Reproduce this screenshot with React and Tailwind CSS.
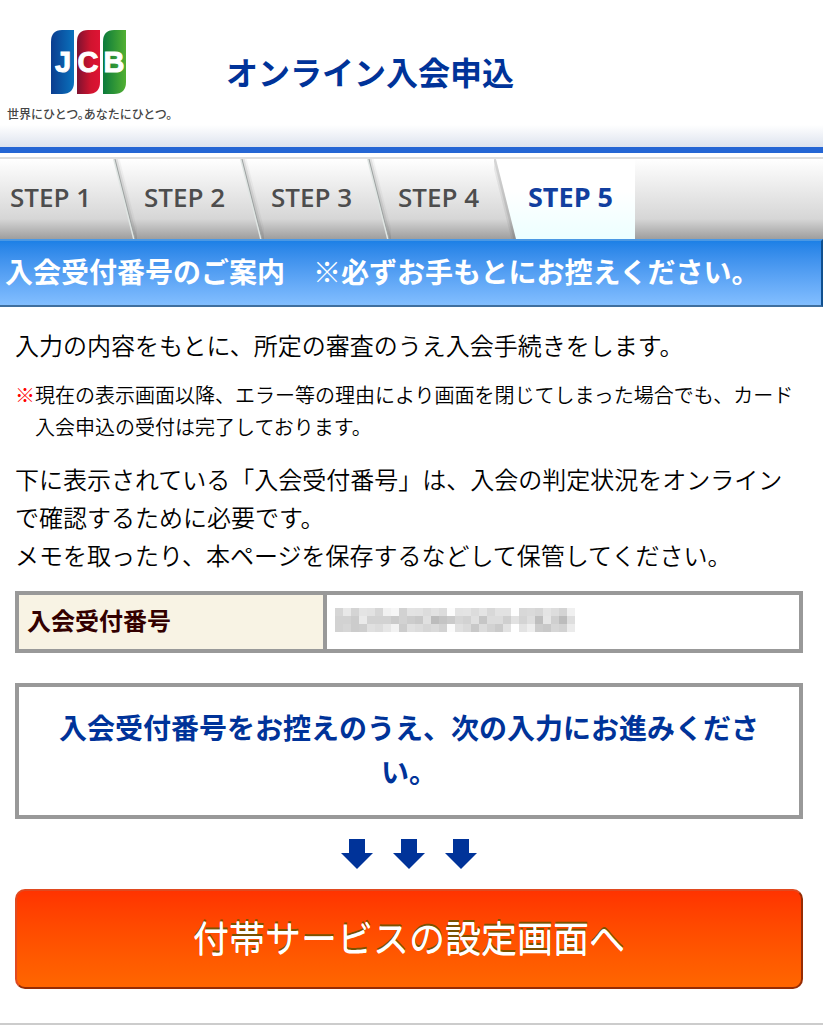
const steps = ["STEP 1", "STEP 2", "STEP 3", "STEP 4", "STEP 5"];

const currentStep = 4;

// grey levels of the masked number, one row per line
const maskRows = [
    "d6 e8 d4 e4 e2 d6 f1 f6 d2 e3 e2 dc e2 dc fc e3 e4 dc e4 d8 e2 e2 fe d8 da d6 e4 dd d4 f0",
    "d2 d2 cc ea d2 d2 d2 ca d2 cc c8 e0 bc c4 ca d6 d2 e0 c6 dc dc cf e2 d4 de be e6 cf bc de",
    "d2 d6 cc ce e0 dc e6 f2 cc e0 dc d6 da d2 fb e0 da c8 dc d2 ca e2 ff e3 ee cc c8 d6 d2 eb"
].map((row) => row.split(" "));

function JcbLogo() {

    return (

        <svg
            className="h-[66px] w-[78px]"
            viewBox="0 0 78 66"
            role="img"
            aria-label="JCB"
        >
            <defs>
                <linearGradient id="jcbBlue">
                    <stop offset="0" stopColor="#0b3d8f" />
                    <stop offset="1" stopColor="#0a72bd" />
                </linearGradient>
                <linearGradient id="jcbRed">
                    <stop offset="0" stopColor="#7d1230" />
                    <stop offset="0.6" stopColor="#d0142f" />
                    <stop offset="1" stopColor="#de1434" />
                </linearGradient>
                <linearGradient id="jcbGreen">
                    <stop offset="0" stopColor="#0b7a3b" />
                    <stop offset="1" stopColor="#52b032" />
                </linearGradient>
            </defs>
            <path d="M13 2H25V54Q25 66 13 66H2V14Q2 2 13 2Z" fill="url(#jcbBlue)" />
            <path d="M39 2H51V54Q51 66 39 66H28V14Q28 2 39 2Z" fill="url(#jcbRed)" />
            <path d="M65 2H77V54Q77 66 65 66H54V14Q54 2 65 2Z" fill="url(#jcbGreen)" />
            <g
                fill="#fff"
                stroke="#fff"
                fontFamily="Liberation Sans, sans-serif"
                fontWeight="700"
                fontSize="29"
                textAnchor="middle"
            >
                <text x="14" y="44">J</text>
                <text x="39" y="44">C</text>
                <text x="65" y="44">B</text>
            </g>
        </svg>

    );

}

function StepDivider({ beforeCurrent }) {

    return (

        <svg
            className="h-20 w-6 shrink-0"
            viewBox="0 0 24 80"
            aria-hidden="true"
        >
            <defs>
                <linearGradient id="currentFill" x2="0" y2="1">
                    <stop offset="0.4" stopColor="#fff" />
                    <stop offset="1" stopColor="#ecffff" />
                </linearGradient>
            </defs>
            {
                beforeCurrent
                    ? (
                        <>
                            <path d="M0 0L20 80" stroke="#555" strokeOpacity="0.1" strokeWidth="5" />
                            <path d="M1 0L21 80" stroke="#555" strokeOpacity="0.15" strokeWidth="3" />
                            <path d="M2 0H24V80H22Z" fill="url(#currentFill)" />
                        </>
                    )
                    : (
                        <>
                            <path d="M4 0L24 80" stroke="#555" strokeOpacity="0.06" strokeWidth="5" />
                            <path d="M3 0L23 80" stroke="#555" strokeOpacity="0.12" strokeWidth="3" />
                            <path d="M1 0L21 80" stroke="#e0e5e3" strokeWidth="2" />
                            <path d="M2 0L22 80" stroke="#9ca1a0" />
                        </>
                    )
            }
        </svg>

    );

}

function StepBar() {

    return (

        <nav
            aria-label="STEP"
            className="mt-1 border-t-2 border-[#dedede] bg-linear-to-b from-white via-[#d6d6d6] via-75% to-[#9e9e9e]"
        >

            <ol className="flex h-20">

                {steps.map((step, i) => (

                    <li
                        key={step}
                        aria-current={i === currentStep ? "step" : undefined}
                        className="flex"
                    >

                        {i > 0 && <StepDivider beforeCurrent={i === currentStep} />}

                        <span
                            className={
                                i === currentStep
                                    ? "w-[117px] bg-linear-to-b from-white from-40% to-[#ecffff] pl-[10px] font-['Open_Sans',sans-serif] text-[27px] leading-[76px] font-bold text-[#123f9f]"
                                    : i === 0
                                        ? "w-[113px] pl-[10px] font-['Open_Sans',sans-serif] text-[26px] leading-[76px] font-semibold text-[#4d4d4d]"
                                        : "w-[103px] pl-[7px] font-['Open_Sans',sans-serif] text-[26px] leading-[76px] font-semibold text-[#4d4d4d]"
                            }
                        >
                            {step}
                        </span>

                    </li>

                ))}

            </ol>

        </nav>

    );

}

function MaskedNumber() {

    return (

        <svg
            className="h-6 w-60"
            viewBox="0 0 30 3"
            shapeRendering="crispEdges"
            aria-hidden="true"
        >
            {maskRows.map((row, y) =>
                row.map((c, x) => (
                    <rect
                        key={`${x}-${y}`}
                        x={x}
                        y={y}
                        width="1"
                        height="1"
                        fill={`#${c}${c}${c}`}
                    />
                ))
            )}
        </svg>

    );

}

function DownArrow() {

    return (

        <svg className="h-[30px] w-8" viewBox="0 0 32 30" aria-hidden="true">
            <path d="M8 0H24V14H32L16 30L0 14H8Z" fill="#039" />
        </svg>

    );

}

function App() {

    return (

        <div className="border-b-2 border-[#ccc] bg-white font-['Noto_Sans_CJK_JP',sans-serif] font-[350] text-black">

            {/* Header */}

            <header className="flex h-[153px] items-start border-b-[6px] border-[#2566d4] bg-linear-to-b from-white from-85% to-[#dde3ee]">

                <div className="flex w-[219px] flex-col pt-7 pl-[7px]">

                    <div className="pl-[42px]">
                        <JcbLogo />
                    </div>

                    <p className="mt-2 text-[12px] leading-6 font-medium whitespace-nowrap text-[#444] [font-feature-settings:'halt']">
                        世界にひとつ。あなたにひとつ。
                    </p>

                </div>

                <h1 className="pt-[47px] pl-[7px] text-[32px] leading-[48px] font-bold text-[#039]">
                    オンライン入会申込
                </h1>

            </header>

            <StepBar />

            <h2 className="border-y-2 border-r-2 border-t-[#4a98e4] border-r-[#10508f] border-b-[#3f6f9f] bg-linear-to-b from-[#1c80e6] to-[#82beff] pb-1 pl-[5px] text-[28px] leading-[60px] font-bold text-white">
                入会受付番号のご案内　※必ずお手もとにお控えください。
            </h2>

            <main className="pt-[19px] pr-5 pb-[34px] pl-[15px]">

                <p className="text-[24px] leading-[38px]">
                    入力の内容をもとに、所定の審査のうえ入会手続きをします。
                </p>

                <p className="mt-[15px] flex text-[20px] leading-8">
                    <span className="text-[#f00]">※</span>
                    <span>
                        現在の表示画面以降、エラー等の理由により画面を閉じてしまった場合でも、カード入会申込の受付は完了しております。
                    </span>
                </p>

                <p className="mt-[17px] text-[24px] leading-[38px]">
                    下に表示されている「入会受付番号」は、入会の判定状況をオンラインで確認するために必要です。
                    <br />
                    メモを取ったり、本ページを保存するなどして保管してください。
                </p>

                <table className="mt-[17px] w-full table-fixed border-collapse">
                    <tbody>
                        <tr>
                            <th
                                scope="row"
                                className="w-[308px] border-4 border-[#999] bg-[#f8f3e4] px-2 pt-[6px] pb-[10px] text-left text-[24px] leading-[38px] font-bold text-[#300]"
                            >
                                入会受付番号
                            </th>
                            <td className="border-4 border-[#999] px-2 pt-[6px] pb-[10px]">
                                <MaskedNumber />
                            </td>
                        </tr>
                    </tbody>
                </table>

                {/* Next step */}

                <p className="mt-[30px] border-4 border-[#999] px-8 pt-[18px] pb-[22px] text-center text-[28px] leading-[44px] font-bold text-[#039]">
                    入会受付番号をお控えのうえ、次の入力にお進みください。
                </p>

                <div className="mt-5 flex justify-center gap-5">
                    <DownArrow />
                    <DownArrow />
                    <DownArrow />
                </div>

                <button
                    type="button"
                    className="mt-5 h-[100px] w-full rounded-[10px] border-2 border-t-[#e04a20] border-r-[#962c04] border-b-[#962c04] border-l-[#e04a20] bg-linear-to-b from-[#f30] to-[#f60] pb-[6px] text-[36px] text-white [text-shadow:0_1px_0_#fff,0_-2px_0_#7a5200]"
                >
                    付帯サービスの設定画面へ
                </button>

            </main>

        </div>

    );

}

export default App;
